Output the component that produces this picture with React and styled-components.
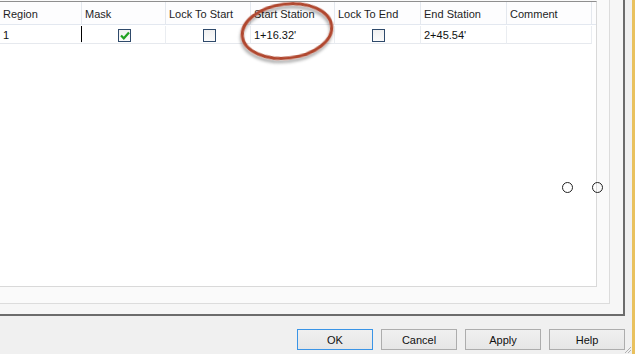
import React from 'react';
import styled, { createGlobalStyle } from 'styled-components';

const GlobalStyle = createGlobalStyle`
  html, body {
    margin: 0;
    padding: 0;
    background: #f0f0f0;
  }
  body {
    font-family: "Liberation Sans", Arial, sans-serif;
    font-size: 11px;
    color: #1b1b1b;
  }
`;

const columns = [
  { key: 'region', title: 'Region', width: 82 },
  { key: 'mask', title: 'Mask', width: 84 },
  { key: 'lockStart', title: 'Lock To Start', width: 85 },
  { key: 'start', title: 'Start Station', width: 84 },
  { key: 'lockEnd', title: 'Lock To End', width: 86 },
  { key: 'end', title: 'End Station', width: 86 },
  { key: 'comment', title: 'Comment', width: 85 },
];

const rows = [
  { region: '1', mask: true, lockStart: false, start: "1+16.32'", lockEnd: false, end: "2+45.54'", comment: '' },
];

const Window = styled.div`
  position: relative;
  width: 632px;
  height: 354px;
  border-right: 3px solid #e9c15e;
  background: #f0f0f0;
  display: flex;
  flex-direction: column;
  overflow: hidden;
`;

const Frame = styled.div`
  width: 623px;
  height: 314px;
  background: #f6f6f6;
  border-right: 2px solid #6c6c6c;
  border-bottom: 2px solid #6c6c6c;
  padding: 0 13px 10px 0;
  box-sizing: content-box;
  display: flex;
  flex-direction: column;
  margin-right: 7px;
  box-sizing: border-box;
  width: 625px;
  height: 316px;
`;

const Panel = styled.div`
  flex: 1;
  background: #fafafa;
  border-right: 1px solid #dcdcdc;
  border-bottom: 1px solid #dcdcdc;
  padding: 1px 12px 16px 0;
  display: flex;
  flex-direction: column;
`;

const GridArea = styled.div`
  flex: 1;
  background: #ffffff;
  border-top: 1px solid #8f8f8f;
  border-right: 1px solid #d9d9d9;
  border-bottom: 1px solid #d9d9d9;
`;

const HeaderRow = styled.div`
  display: flex;
  height: 22px;
  background: #fdfdfe;
  border-bottom: 1px solid #e3e8f0;
`;

const HeaderCell = styled.div`
  width: ${p => p.$w}px;
  flex: none;
  box-sizing: border-box;
  padding: 0 0 0 3px;
  display: flex;
  align-items: center;
  padding-top: 2px;
  border-right: 1px solid #e4e8ee;
  color: #1e1e1e;
  white-space: nowrap;
`;

const DataRow = styled.div`
  display: flex;
  height: 18px;
  margin-top: 1px;
`;

const Cell = styled.div`
  width: ${p => p.$w}px;
  flex: none;
  box-sizing: border-box;
  display: flex;
  align-items: center;
  justify-content: ${p => (p.$center ? 'center' : 'flex-start')};
  padding: 1px 0 0 ${p => (p.$center ? 0 : 3)}px;
  border-right: 1px solid #eaedf1;
  border-bottom: 1px solid #e6e9ee;
  color: #111;
  position: relative;
`;

const Caret = styled.span`
  position: absolute;
  left: -1px;
  top: 0;
  width: 1px;
  height: 16px;
  background: #000;
`;

const Box = styled.span`
  width: 11px;
  height: 11px;
  border: 1px solid #2f4a6b;
  background: linear-gradient(#f0f0f0, #fbfbfb);
  display: flex;
  align-items: center;
  justify-content: center;
  margin-left: ${p => p.$shift || 0}px;
`;

const Ellipse = styled.svg`
  position: absolute;
  left: 232px;
  top: 0;
  overflow: visible;
  pointer-events: none;
`;

const Handle = styled.span`
  position: absolute;
  top: 182px;
  left: ${p => p.$x}px;
  width: 9px;
  height: 9px;
  border: 1px solid #222;
  border-radius: 50%;
`;

const ButtonBar = styled.div`
  flex: 1;
  display: flex;
  justify-content: flex-end;
  align-items: flex-start;
  gap: 8px;
  padding: 13px 7px 0 0;
`;

const Button = styled.button`
  width: 76px;
  height: 21px;
  font-family: "Liberation Sans", Arial, sans-serif;
  font-size: 11px;
  color: #111;
  background: linear-gradient(#f0f0f0, #e6e6e6);
  border: 1px solid ${p => (p.$primary ? '#3a94e6' : '#adadad')};
  padding: 0;
  margin: 0;
`;

const Grip = styled.svg`
  position: absolute;
  right: 0;
  bottom: 0;
`;

function CheckBox({ checked, shift }) {
  return (
    <Box $shift={shift}>
      {checked && (
        <svg width="10" height="9" viewBox="0 0 10 9">
          <path d="M1 4.5 L3.8 7.3 L9 1.5" fill="none" stroke="#21a121" strokeWidth="2.2" />
        </svg>
      )}
    </Box>
  );
}

function renderCell(col, row) {
  const v = row[col.key];
  if (typeof v === 'boolean') {
    return (
      <Cell key={col.key} $w={col.width} $center>
        {col.key === 'mask' && <Caret />}
        <CheckBox checked={v} shift={2} />
      </Cell>
    );
  }
  return (
    <Cell key={col.key} $w={col.width}>
      {v}
    </Cell>
  );
}

export default function App() {
  return (
    <>
      <GlobalStyle />
      <Window>
        <Frame>
          <Panel>
            <GridArea>
              <HeaderRow>
                {columns.map(c => (
                  <HeaderCell key={c.key} $w={c.width}>{c.title}</HeaderCell>
                ))}
              </HeaderRow>
              {rows.map((r, i) => (
                <DataRow key={i}>{columns.map(c => renderCell(c, r))}</DataRow>
              ))}
            </GridArea>
          </Panel>
        </Frame>
        <ButtonBar>
          <Button $primary>OK</Button>
          <Button>Cancel</Button>
          <Button>Apply</Button>
          <Button>Help</Button>
        </ButtonBar>

        <Ellipse width="110" height="70" viewBox="0 0 110 70">
          <defs>
            <filter id="sh" x="-20%" y="-20%" width="140%" height="150%">
              <feDropShadow dx="-1" dy="3" stdDeviation="1.5" floodColor="#000" floodOpacity="0.35" />
            </filter>
          </defs>
          <ellipse
            cx="55"
            cy="31"
            rx="45"
            ry="27"
            transform="rotate(-7 55 31)"
            fill="none"
            stroke="#b0472f"
            strokeWidth="3"
            filter="url(#sh)"
          />
        </Ellipse>

        <Handle $x={562} />
        <Handle $x={592} />

        <Grip width="9" height="9" viewBox="0 0 9 9">
          <path d="M8 2 L2 8 M8 5 L5 8" stroke="#b0b0b0" strokeWidth="1" />
        </Grip>
      </Window>
    </>
  );
}
